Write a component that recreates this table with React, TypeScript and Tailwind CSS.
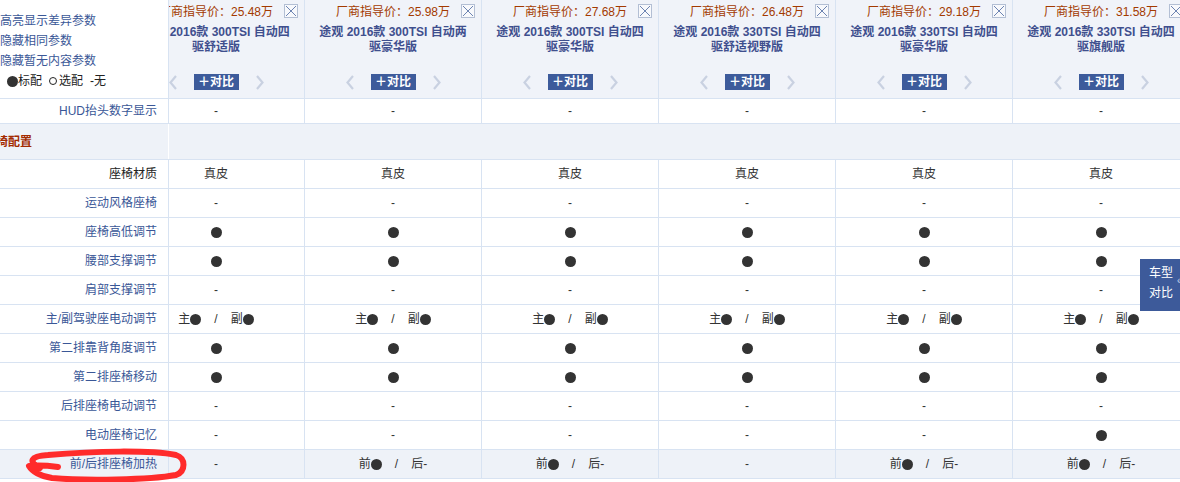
import React from 'react'

type Cell = 'dot' | 'dash' | string | { a: string; av: 'dot' | 'dash'; b: string; bv: 'dot' | 'dash' }

interface Row {
  label: string
  values: Cell[]
  black?: boolean
  shade?: boolean
}

const models = [
  { price: '25.48', l1: '途观 2016款 300TSI 自动四', l2: '驱舒适版' },
  { price: '25.98', l1: '途观 2016款 300TSI 自动两', l2: '驱豪华版' },
  { price: '27.68', l1: '途观 2016款 300TSI 自动四', l2: '驱豪华版' },
  { price: '26.48', l1: '途观 2016款 330TSI 自动四', l2: '驱舒适视野版' },
  { price: '29.18', l1: '途观 2016款 330TSI 自动四', l2: '驱豪华版' },
  { price: '31.58', l1: '途观 2016款 330TSI 自动四', l2: '驱旗舰版' },
]

const all = (v: Cell): Cell[] => [v, v, v, v, v, v]
const zhuFu: Cell = { a: '主', av: 'dot', b: '副', bv: 'dot' }
const qianHou: Cell = { a: '前', av: 'dot', b: '后', bv: 'dash' }

const rows: Row[] = [
  { label: '座椅材质', values: all('真皮'), black: true },
  { label: '运动风格座椅', values: all('dash') },
  { label: '座椅高低调节', values: all('dot') },
  { label: '腰部支撑调节', values: all('dot') },
  { label: '肩部支撑调节', values: all('dash') },
  { label: '主/副驾驶座电动调节', values: all(zhuFu) },
  { label: '第二排靠背角度调节', values: all('dot') },
  { label: '第二排座椅移动', values: all('dot') },
  { label: '后排座椅电动调节', values: all('dash') },
  { label: '电动座椅记忆', values: ['dash', 'dash', 'dash', 'dash', 'dash', 'dot'] },
  { label: '前/后排座椅加热', values: ['dash', qianHou, qianHou, 'dash', qianHou, qianHou], shade: true },
]

const Dot = () => <span className="inline-block w-[11px] h-[11px] rounded-full bg-[#333]" />
const Dash = () => <span className="inline-block text-[#333]">-</span>

function Mark({ v }: { v: 'dot' | 'dash' }) {
  return v === 'dot' ? <Dot /> : <Dash />
}

function Value({ v }: { v: Cell }) {
  if (v === 'dot') return <Dot />
  if (v === 'dash') return <Dash />
  if (typeof v === 'string') return <span className="text-[#333]">{v}</span>
  return (
    <span className="flex items-center text-[#333]">
      <span>{v.a}</span>
      <Mark v={v.av} />
      <span className="mx-[13px]">/</span>
      <span>{v.b}</span>
      <Mark v={v.bv} />
    </span>
  )
}

// first model column is partly hidden under the fixed label column
function Col({ index, className = '', children }: { index: number; className?: string; children: React.ReactNode }) {
  if (index === 0) {
    return (
      <div className={`w-[136px] shrink-0 flex justify-end overflow-hidden border-r border-[#d8e3f2] ${className}`}>
        <div className="w-[176px] shrink-0 h-full">{children}</div>
      </div>
    )
  }
  return <div className={`w-[177px] shrink-0 border-r border-[#d8e3f2] ${className}`}>{children}</div>
}

function Chevron({ dir }: { dir: 'l' | 'r' }) {
  return (
    <svg width="8" height="15" viewBox="0 0 8 15">
      <path
        d={dir === 'l' ? 'M7 1 L1.5 7.5 L7 14' : 'M1 1 L6.5 7.5 L1 14'}
        fill="none"
        stroke="#c9d1e1"
        strokeWidth="2.2"
      />
    </svg>
  )
}

function ModelHead({ m }: { m: (typeof models)[number] }) {
  return (
    <div className="relative h-full">
      <div className="pt-[5px] text-center text-[12px] leading-[15px] text-[#a33a00]">
        厂商指导价：{m.price}万
      </div>
      <div className="absolute right-[6px] top-[4px] w-[14px] h-[14px] border border-[#b3bfd4] bg-[#f8f9fc]">
        <svg width="12" height="12" viewBox="0 0 12 12">
          <path d="M1 1 L11 11 M11 1 L1 11" stroke="#6d84b2" strokeWidth="1" />
        </svg>
      </div>
      <div className="mt-[5px] text-center text-[12px] leading-[15px] font-bold text-[#3f4f8e] whitespace-nowrap">
        {m.l1}
        <br />
        {m.l2}
      </div>
      <div className="absolute left-0 right-0 bottom-[8px] flex items-center justify-center gap-[17px]">
        <Chevron dir="l" />
        <span className="w-[45px] h-[16px] bg-[#3d5b9b] text-white text-[12px] font-bold leading-[16px] text-center">
          ＋对比
        </span>
        <Chevron dir="r" />
      </div>
    </div>
  )
}

export default function App() {
  return (
    <div className="relative w-[1180px] h-[482px] overflow-hidden bg-white text-[12px] font-['Liberation_Sans','Noto_Sans_CJK_SC',sans-serif]">
      {/* header */}
      <div className="flex h-[99px] border-b border-[#d8e3f2]">
        <div className="w-[169px] shrink-0 border-r border-[#d8e3f2] pt-[11px] leading-[20px]">
          <div className="text-[#3a5797]">高亮显示差异参数</div>
          <div className="text-[#3a5797]">隐藏相同参数</div>
          <div className="text-[#3a5797]">隐藏暂无内容参数</div>
          <div className="flex items-center pl-[7px] text-[#222]">
            <Dot />
            <span>标配</span>
            <span className="ml-[7px] inline-block w-[8px] h-[8px] rounded-full border border-[#222]" />
            <span className="ml-[2px]">选配</span>
            <span className="ml-[7px]">-无</span>
          </div>
        </div>
        {models.map((m, i) => (
          <Col key={i} index={i} className="bg-[#f0f3f9]">
            <ModelHead m={m} />
          </Col>
        ))}
      </div>

      {/* HUD row */}
      <div className="flex h-[25px] border-b border-[#d8e3f2] items-stretch">
        <div className="w-[169px] shrink-0 border-r border-[#d8e3f2] flex items-center justify-end pr-[11px] text-[#3a5797]">
          HUD抬头数字显示
        </div>
        {models.map((_, i) => (
          <Col key={i} index={i}>
            <div className="h-full flex items-center justify-center">
              <Dash />
            </div>
          </Col>
        ))}
      </div>

      {/* section */}
      <div className="flex h-[36px] border-b border-[#d8e3f2] bg-[#eef2f8]">
        <div className="w-[169px] shrink-0 border-r border-white flex items-center">
          <span className="ml-[-16px] font-bold text-[12px] text-[#a32b00] whitespace-nowrap">座椅配置</span>
        </div>
        <div className="flex-1" />
      </div>

      {rows.map((r) => (
        <div key={r.label} className={`flex h-[29px] border-b border-[#d8e3f2] ${r.shade ? 'bg-[#eef2f8]' : ''}`}>
          <div
            className={`w-[169px] shrink-0 border-r border-[#d8e3f2] flex items-center justify-end pr-[11px] ${
              r.black ? 'text-[#222]' : 'text-[#3a5797]'
            }`}
          >
            {r.label}
          </div>
          {r.values.map((v, i) => (
            <Col key={i} index={i}>
              <div className="h-full flex items-center justify-center">
                <Value v={v} />
              </div>
            </Col>
          ))}
        </div>
      ))}

      {/* floating compare tab */}
      <div className="absolute left-[1140px] top-[259px] w-[48px] h-[52px] bg-[#3d5a9a] text-white text-[12px] leading-[20px] pt-[4px] pl-[9px]">
        <div>车型</div>
        <div>对比</div>
        <span className="absolute left-[37px] top-[12px] text-[10px] text-[#c9d3e8]">«</span>
      </div>

      {/* red hand-drawn mark */}
      <svg className="absolute left-0 top-0 pointer-events-none" width="1180" height="482">
        <path
          d="M40 468 C 28 462, 30 456, 48 455 C 95 451, 150 450, 176 455 C 186 458, 186 471, 176 475 C 150 480, 85 481, 52 478 C 40 476, 32 471, 29 466 C 40 465, 50 466, 58 467"
          fill="none"
          stroke="#ff2b2b"
          strokeWidth="6"
          strokeLinecap="round"
          strokeLinejoin="round"
        />
      </svg>
    </div>
  )
}
